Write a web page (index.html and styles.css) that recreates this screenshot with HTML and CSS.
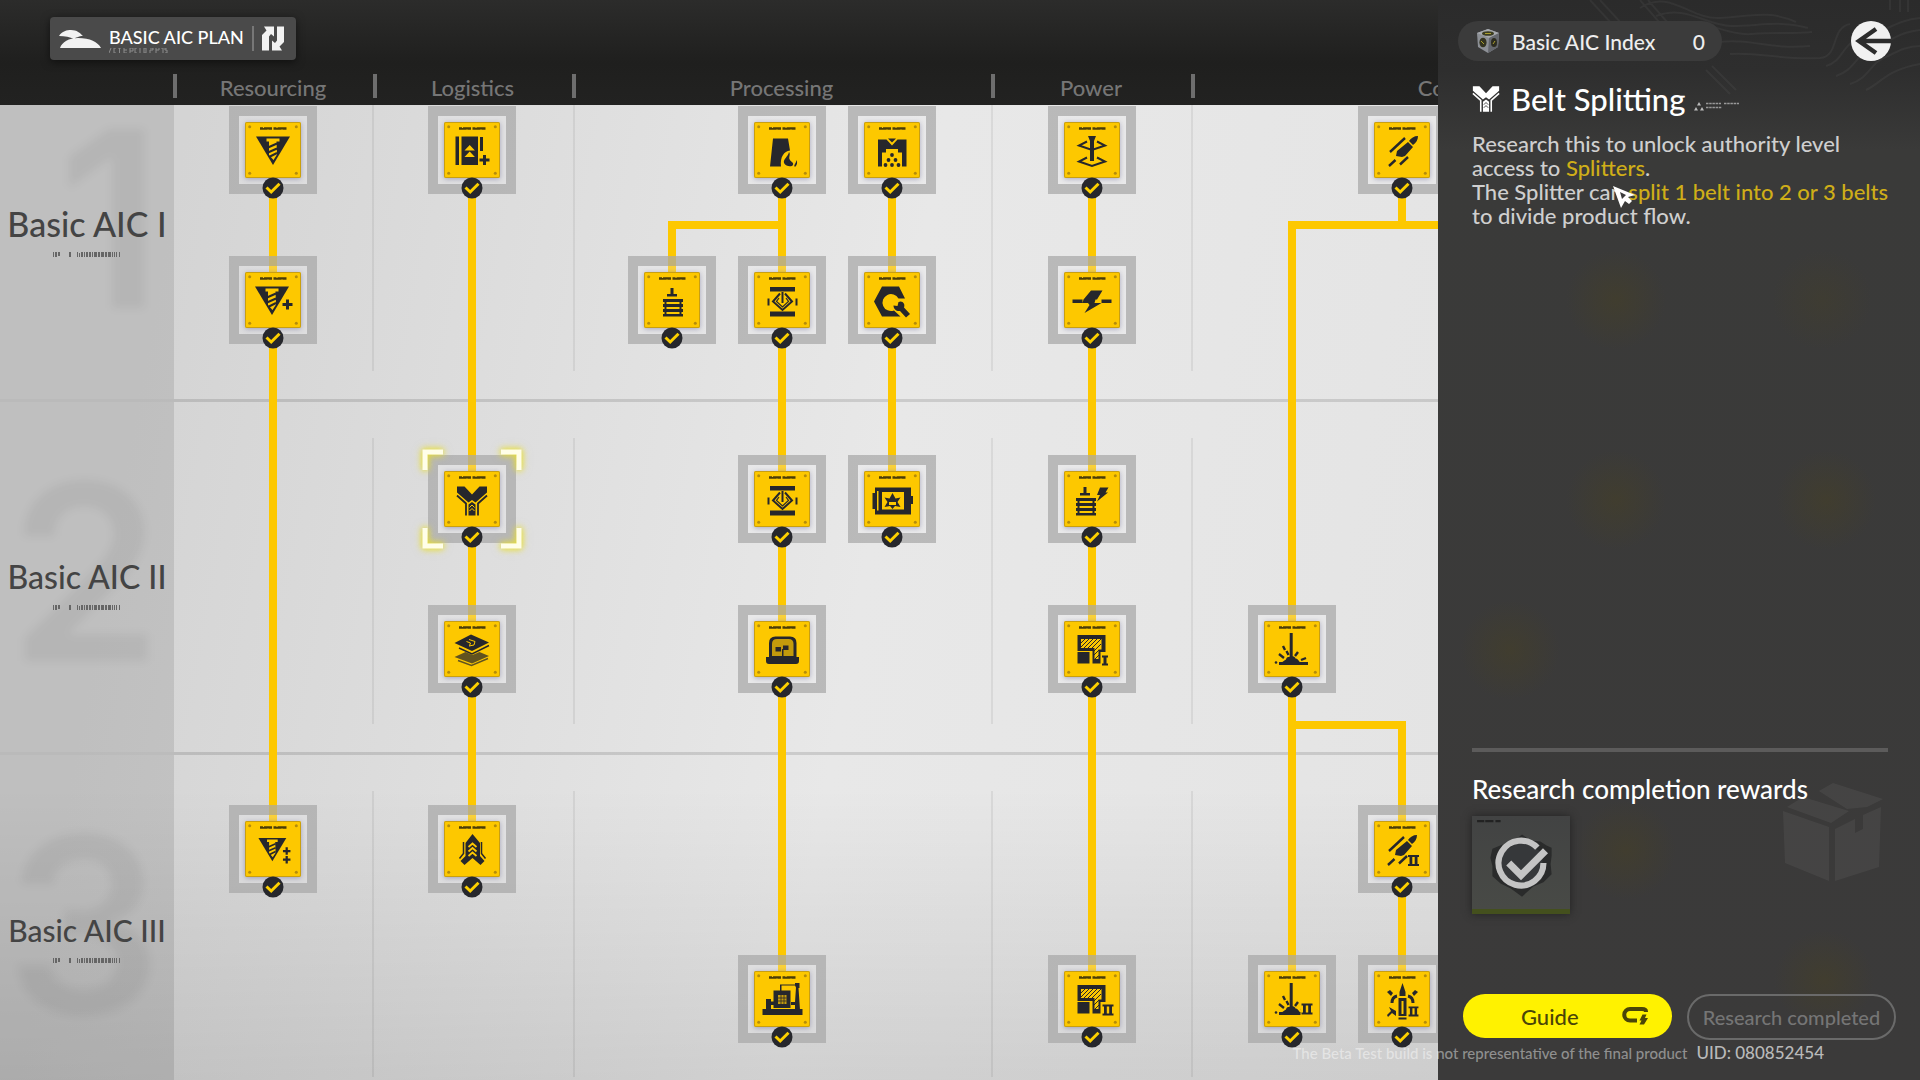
FILE: index.html
```html
<!DOCTYPE html>
<html lang="en">
<head>
<meta charset="utf-8">
<title>Basic AIC Plan</title>
<link rel="stylesheet" href="styles.css">
</head>
<body>
<svg class="defs" aria-hidden="true">
  <defs>
    <g id="screw">
      <path d="M11 14.500H45L28 43Z"/>
      <path class="y" d="M21.500 16.500h13v3h-3l.5 13-3.500 5.500-4.500-5v-13.500h-2.500z"/>
      <path class="k" d="M23 25.500l9-4M23 30.500l9-4M24 35l8-4"/>
    </g>
    <path id="plus" d="M-1.500-5h3v3.500h3.500v3h-3.500v3.500h-3v-3.500h-3.500v-3h3.500z"/>
    <path id="one" d="M0 0h6v2h-1.500v6h1.500v2h-6v-2h1.500v-6h-1.500z"/>
    <path id="two" d="M0 0h11v2h-1.500v7h1.500v2h-11v-2h1.500v-7h-1.500zM4.300 2v7h2.400v-7z" fill-rule="evenodd"/>
    <g id="coil">
      <path d="M26.500 16h3v6h3.500v2.500h-10v-2.500h3.500z"/>
      <path d="M19 27h20v3h-20zM19 32h20v3h-20zM19 37h20v3h-20zM19 42h20v2.500h-20z"/>
      <path d="M20.500 27h2v17h-2zM35.500 27h2v17h-2z"/>
    </g>
    <g id="laser">
      <path d="M25.700 12h3v24h-3zM15 41h29v3h-29zM18 42c1-3 4-2 4.500-5 2-2 3 0 4.500-3 1.500 2 4 1 4.500 3.500 2 0 3 2 5 4.500z"/>
      <path class="k" style="stroke-width:2.400" d="M15 33l5 4M19 25l2 4M22.500 30l2 4M34 31l-3 4M37 39l5-2"/>
      <circle cx="12" cy="41.500" r="1.300"/>
    </g>
    <g id="bullet">
      <path d="M44 14c0 4-2 7-5 9l-4-4c2-3 5-5 9-5zM34 20l5 5-8 9-3 1-6-1 1-5z"/>
      <path class="k" d="M31 16L16 30M21.500 38L15 44M34 35l-8 7.500" style="stroke-width:2.400"/>
    </g>
    <g id="press">
      <path d="M16 15h25v4.500h-25zM16 39.500h25v5h-25zM13.500 26.500h2v7h-2zM41.500 26.500h2v7h-2z"/>
      <path class="k" d="M26 21.500l-7 8 9.500 8.500 9.500-8.500-7-8M28.500 20v11"/>
      <path class="k" d="M25 26l-2.500 3.500 6 5.500 6-5.500-2.500-3.500" style="stroke-width:1.200"/>
    </g>
    <g id="plot">
      <path d="M13.500 14h28v17h-5v11.500h-8v-12.500h-15z"/>
      <path d="M17 18h20.500v10.500h-3v9.500h-4v-11h-13.500z" class="y"/>
      <path class="k" style="stroke-width:1" d="M17 22l4-4M17 26l8-8M20 27l9-9M24 27l9-9M28 27l9-9M30 30l7-7M30 34l5-5M31 38l4-4"/>
      <path d="M13.500 31h12v11.500h-12z"/>
    </g>
    <symbol id="i-drill" viewBox="0 0 56 56"><use href="#screw"/></symbol>
    <symbol id="i-drill2" viewBox="0 0 56 56"><g transform="translate(-1 0)"><use href="#screw"/></g><use href="#plus" x="42.500" y="32.500"/></symbol>
    <symbol id="i-drill3" viewBox="0 0 56 56"><g transform="translate(4.400 5) scale(.82)"><use href="#screw"/></g><g transform="translate(41.700 30) scale(.75)"><use href="#plus"/></g><g transform="translate(41.700 38.700) scale(.75)"><use href="#plus"/></g></symbol>
    <symbol id="i-belt" viewBox="0 0 56 56"><path d="M11.500 14.500h3.500v28.500h-3.500zM17.500 14.500h16.500v28.500h-16.500zM36 15h3v14h-3z"/><path class="y" d="M20.500 28.500l5.200-5.500 5.200 5.500zM20.500 35l5.200-5.500 5.200 5.500z"/><use href="#plus" x="40.500" y="38"/></symbol>
    <symbol id="i-split" viewBox="0 0 56 56"><path d="M13 15.500h7.500l7.500 8 7.500-8h7.500v6l-11.500 10-3.500-2.500-3.500 2.500-11.500-10zM24.500 33.500l3.500-2.500 3.500 2.500v11h-7z"/><path class="k" style="stroke-width:1.800" d="M13 24.500l9 8v12M43 24.500l-9 8v12"/><path class="f" d="M25.500 36.500l2.500-2.500 2.500 2.500M25.500 40l2.500-2.500 2.500 2.500"/></symbol>
    <symbol id="i-layers" viewBox="0 0 56 56"><path d="M10.500 22l16.500-8.500 18 8-17 8.500z"/><path class="k" style="stroke-width:1.500" d="M15 27l13 6 17-8.500"/><path class="f" d="M25 18.500l6 2-1 3.500-5 1M22.500 20.500l4 1.500-1 2.500"/><g opacity=".72"><path d="M10.500 36l11-5 7 3 7-3 9.500 4-17 7.500z"/><path class="k" style="stroke-width:1.500" d="M14 39.500l13.500 5 16.500-7"/></g></symbol>
    <symbol id="i-merge" viewBox="0 0 56 56"><path d="M28.500 13l7.500 9v13l4.500 5-4 4-8-7-8 7-4-4 5-5v-13z"/><path class="k" style="stroke-width:1.500" d="M19.500 21v11.500l-4 5M37.500 21v11.500l4 5"/><path class="f" style="stroke-width:1.800" d="M24.500 26l4-3.500 4 3.500M24.500 30.500l4-3.500 4 3.500M24.500 35l4-3.500 4 3.500"/></symbol>
    <symbol id="i-furnace" viewBox="0 0 56 56"><path d="M19 16.500h15l2 12c-6 1-10 6-9 16h-11z"/><path d="M35 30c2 3-1 5 1 8 1 2 4 2 3 5-1 2-7 2-9-2-1-4 4-6 5-11zM42.500 38c1 2 1 5-1.500 7-2-2 1-3 1.500-7z"/></symbol>
    <symbol id="i-crusher" viewBox="0 0 56 56"><path d="M14 17.500h8.500l5.500 6 5.500-6h9v27h-4.500v-14h-4v-3.500h-12v3.500h-4v14h-4zM24 16.500h8l-4 4z"/><circle cx="28" cy="33" r="1.900"/><circle cx="24.500" cy="38" r="1.900"/><circle cx="31.500" cy="38" r="1.900"/><circle cx="21.500" cy="43" r="1.900"/><circle cx="28" cy="43" r="1.900"/><circle cx="34.500" cy="43" r="1.900"/></symbol>
    <symbol id="i-pole" viewBox="0 0 56 56"><path d="M24 14h8l-2 5v20h-4v-20z"/><path class="k" d="M23 19.500l-8 4 13 4.500 13-4.500-8-4M23 35.500l-8 4 13 4.500 13-4.500-8-4"/></symbol>
    <symbol id="i-coil" viewBox="0 0 56 56"><use href="#coil"/></symbol>
    <symbol id="i-press" viewBox="0 0 56 56"><use href="#press"/></symbol>
    <symbol id="i-wrench" viewBox="0 0 56 56"><path d="M18 14.500h17l6 12h-6.500a8.500 8.500 0 1 0-4.500 12l6.500 6h-18.500l-8-15z"/><path d="M29.500 33.500l4 .5 1-4c4-2 7 2 5.500 5.500l6 6.500-4 3.500-6-6.500c-3.500.5-6.500-2-6.500-5.500z"/></symbol>
    <symbol id="i-bolt" viewBox="0 0 56 56"><path d="M27 18.500h11.500l-5.500 9h-13.500zM24 31h13.500l-17 10 5-8zM8.500 27.500h10v3.500h-10zM37.500 27.500h10v3.500h-10zM19.500 27.500h12l-1 3.500h-12z"/></symbol>
    <symbol id="i-reel" viewBox="0 0 56 56"><path fill-rule="evenodd" d="M11 16.500h36v27h-36zM18 21h22v17.500h-22z"/><path d="M8.500 22h3v16h-3zM46 25h3v8h-3z"/><path d="M28.500 22l3 5.500 5-1-3 4.500 3 5-5.500-1-2.500 3-2.500-3-5.500 1 3-5-3-4.500 5 1z"/><path class="y" d="M25 31h7v3h-7zM13 20h1.500v19.500h-1.500z"/></symbol>
    <symbol id="i-charge" viewBox="0 0 56 56"><g transform="translate(-7 0)"><use href="#coil"/></g><path d="M36 16.500h8.500l-3 5h2.500l-11 9 3-6.500h-3z"/></symbol>
    <symbol id="i-dome" viewBox="0 0 56 56"><path d="M15 36v-14q0-6.500 6.500-6.500h14.500q6.500 0 6.500 6.500v14z"/><path fill="#c39b0c" d="M18 35v-12q0-5 5-5h11.500q5 0 5 5v12z"/><path d="M12 36h33v4q0 3-3 3h-27q-3 0-3-3zM21.500 26h5.500v4.500h-5.500zM29 24.500h5.500v4.500h-5.500zM28 28h1.500v8h-1.500z"/></symbol>
    <symbol id="i-plot1" viewBox="0 0 56 56"><use href="#plot"/><use href="#one" x="38" y="34.500"/></symbol>
    <symbol id="i-plot2" viewBox="0 0 56 56"><use href="#plot"/><use href="#two" x="38.500" y="33.500"/></symbol>
    <symbol id="i-laser" viewBox="0 0 56 56"><use href="#laser"/></symbol>
    <symbol id="i-laser2" viewBox="0 0 56 56"><use href="#laser"/><path class="y" d="M36.500 31h12v14h-12z"/><use href="#two" x="37.500" y="32.500"/></symbol>
    <symbol id="i-bullet" viewBox="0 0 56 56"><use href="#bullet"/></symbol>
    <symbol id="i-bullet2" viewBox="0 0 56 56"><g transform="translate(-1 0)"><use href="#bullet"/></g><use href="#two" x="34" y="34"/></symbol>
    <symbol id="i-ammo2" viewBox="0 0 56 56"><path d="M28.500 12l3 9v4h-6v-4zM24.500 27h8v18h-8zM24.500 46.500h8v2h-8z"/><path class="y" d="M27.500 30h2v13h-2z"/><path class="k" d="M23 25q-5 1-5 7M34 25q5 1 5 7" style="stroke-width:3"/><path d="M13 21l3-2 3 3-2 3zM44 21l-3-2-3 3 2 3zM15 36l7 4v5l-4-3-4 4-1-2 4-4z"/><use href="#two" x="34.500" y="35" transform="translate(3.500 4) scale(.9)"/></symbol>
    <symbol id="i-machine" viewBox="0 0 56 56"><path d="M8.500 38h40v6h-40zM12 28h5v2.500h3v3.500h-3v4h-5zM19.500 19.500h17v17.500h-17zM26 14h1.500v6h-1.500z"/><path d="M26 13.500h15v-1.500h4.500v5h-1l1.500 22h-5v-5h-4v-3h4l1-14.500-1-2h-15z"/><path fill="#c39b0c" d="M24 24h8.500v9h-8.500z"/><path class="k" style="stroke-width:.8" d="M24 27h8.500M24 30h8.500M27 24v9M30 24v9"/></symbol>
    <symbol id="plate" viewBox="0 0 56 56">
      <path d="M15 5.300h12v2.400h-12zM28.500 5.300h13v2.400h-13z" fill="#4b3d08"/>
      <path d="M18.500 5v1M23 7.500v1M32 5v1M37 7.500v1" stroke="#fdc800"/>
      <g fill="#b48c0c"><circle cx="4.700" cy="4.700" r="1.500"/><circle cx="51.300" cy="4.700" r="1.500"/><circle cx="4.700" cy="51.300" r="1.500"/><circle cx="51.300" cy="51.300" r="1.500"/></g>
    </symbol>
    <symbol id="done" viewBox="0 0 22 22"><circle cx="11" cy="11" r="10.500" fill="#26272c"/><path d="M4.500 10.500l4.700 4.500 8.300-8.300" fill="none" stroke="#fdd000" stroke-width="3"/></symbol>
    <symbol id="microcode" viewBox="0 0 68 5"><path d="M0 0h1v5h-1zM2 0h2v5h-2zM5 0h2v4h-2zM16 0h2v5h-2zM24 0h1v5h-1zM26 1h1v4h-1zM28 0h2v5h-2zM31 0h1v5h-1zM33 0h2v5h-2zM36 0h2v5h-2zM39 0h1v5h-1zM41 0h3v5h-3zM45 0h2v5h-2zM48 0h3v5h-3zM52 0h2v5h-2zM55 0h3v5h-3zM59 0h1v5h-1zM61 0h1v5h-1zM63 0h1v5h-1zM66 0h1v5h-1z"/></symbol>
  </defs>
</svg>

<div class="screen">
  <main class="plan">
    <header class="plan-header">
      <button class="plan-switch" type="button">
        <svg class="hill" viewBox="0 0 42 18" aria-hidden="true"><path d="M0 6C3 1 8 0 12 0c6 0 9 3 12 6-4 0-8 2-9 3-4-2-9-3-15-3zM1 18C3 12 10 8 19 8c12 0 20 4 23 10z"/></svg>
        <span class="plan-name">BASIC AIC PLAN
          <svg class="fineprint" viewBox="0 0 60 5" aria-hidden="true"><path d="M2 0L0 5M7 0h-2v5h2M9 0h3M10.500 0v5M15 0v5h3M15 2h3M21 5v-5h3v3h-3M28 0h-2v5h2M31 0v5M35 0h2v5h-2zM41 0h3v2h-3v3M47 0v5M47 2h3v-2M52 0h2v5M58 0h-2v2h2v3h-2"/></svg>
        </span>
        <svg class="swap" viewBox="0 0 22 25" aria-hidden="true"><path d="M0 24.500V9L4.500 4.500 2 0.500H12V10.500L9 8 7 10.500V24.500ZM22 0.500V16L17.500 20.500 20 24.500H10V14.500L13 17 15 14.500V0.500Z"/></svg>
      </button>
      <div class="categories">
        <span>Resourcing</span><span>Logistics</span><span>Processing</span><span>Power</span><span>Combat</span>
      </div>
    </header>

    <div class="board">
      <section class="tier tier-first">
        <div class="tier-label"><b class="ghost" aria-hidden="true">1</b><h2 class="size-l">Basic AIC I</h2><svg class="microcode"><use href="#microcode"/></svg></div>
        <div class="lanes"><i></i><i></i><i></i><i></i><i></i></div>
      </section>
      <section class="tier">
        <div class="tier-label"><b class="ghost" aria-hidden="true">2</b><h2 class="size-m">Basic AIC II</h2><svg class="microcode"><use href="#microcode"/></svg></div>
        <div class="lanes"><i></i><i></i><i></i><i></i><i></i></div>
      </section>
      <section class="tier">
        <div class="tier-label"><b class="ghost" aria-hidden="true">3</b><h2 class="size-s">Basic AIC III</h2><svg class="microcode"><use href="#microcode"/></svg></div>
        <div class="lanes"><i></i><i></i><i></i><i></i><i></i></div>
      </section>

      <svg class="links" width="1720" height="1002" aria-hidden="true">
        <path d="M273 82V740M472 82V740M782 82V890M892 82V390M1092 82V890M782 120H672V190M1402 82V120M1292 890V120H1512V190M1292 620H1402V890"/>
      </svg>

      <button class="node c1 r1" type="button" aria-label="Mining I"><svg class="plate"><use href="#plate"/><use href="#i-drill"/></svg><svg class="done"><use href="#done"/></svg></button>
      <button class="node c1 r2" type="button" aria-label="Mining II"><svg class="plate"><use href="#plate"/><use href="#i-drill2"/></svg><svg class="done"><use href="#done"/></svg></button>
      <button class="node c1 r5" type="button" aria-label="Mining III"><svg class="plate"><use href="#plate"/><use href="#i-drill3"/></svg><svg class="done"><use href="#done"/></svg></button>

      <button class="node c2 r1" type="button" aria-label="Belts"><svg class="plate"><use href="#plate"/><use href="#i-belt"/></svg><svg class="done"><use href="#done"/></svg></button>
      <button class="node c2 r3 selected" type="button" aria-label="Belt Splitting"><svg class="plate"><use href="#plate"/><use href="#i-split"/></svg><svg class="done"><use href="#done"/></svg>
        <svg class="brackets" viewBox="0 0 100 100"><path d="M3 21V3h18M79 3h18v18M97 79v18H79M21 97H3V79"/></svg></button>
      <button class="node c2 r4" type="button" aria-label="Belt Bridging"><svg class="plate"><use href="#plate"/><use href="#i-layers"/></svg><svg class="done"><use href="#done"/></svg></button>
      <button class="node c2 r5" type="button" aria-label="Belt Converging"><svg class="plate"><use href="#plate"/><use href="#i-merge"/></svg><svg class="done"><use href="#done"/></svg></button>

      <button class="node c3 r2" type="button" aria-label="Fitting"><svg class="plate"><use href="#plate"/><use href="#i-coil"/></svg><svg class="done"><use href="#done"/></svg></button>
      <button class="node c4 r1" type="button" aria-label="Refining"><svg class="plate"><use href="#plate"/><use href="#i-furnace"/></svg><svg class="done"><use href="#done"/></svg></button>
      <button class="node c4 r2" type="button" aria-label="Moulding I"><svg class="plate"><use href="#plate"/><use href="#i-press"/></svg><svg class="done"><use href="#done"/></svg></button>
      <button class="node c4 r3" type="button" aria-label="Moulding II"><svg class="plate"><use href="#plate"/><use href="#i-press"/></svg><svg class="done"><use href="#done"/></svg></button>
      <button class="node c4 r4" type="button" aria-label="Planting"><svg class="plate"><use href="#plate"/><use href="#i-dome"/></svg><svg class="done"><use href="#done"/></svg></button>
      <button class="node c4 r6" type="button" aria-label="Machining"><svg class="plate"><use href="#plate"/><use href="#i-machine"/></svg><svg class="done"><use href="#done"/></svg></button>
      <button class="node c5 r1" type="button" aria-label="Shredding"><svg class="plate"><use href="#plate"/><use href="#i-crusher"/></svg><svg class="done"><use href="#done"/></svg></button>
      <button class="node c5 r2" type="button" aria-label="Parts"><svg class="plate"><use href="#plate"/><use href="#i-wrench"/></svg><svg class="done"><use href="#done"/></svg></button>
      <button class="node c5 r3" type="button" aria-label="Grinding"><svg class="plate"><use href="#plate"/><use href="#i-reel"/></svg><svg class="done"><use href="#done"/></svg></button>

      <button class="node c6 r1" type="button" aria-label="Pylons"><svg class="plate"><use href="#plate"/><use href="#i-pole"/></svg><svg class="done"><use href="#done"/></svg></button>
      <button class="node c6 r2" type="button" aria-label="Electricity"><svg class="plate"><use href="#plate"/><use href="#i-bolt"/></svg><svg class="done"><use href="#done"/></svg></button>
      <button class="node c6 r3" type="button" aria-label="Thermal Power"><svg class="plate"><use href="#plate"/><use href="#i-charge"/></svg><svg class="done"><use href="#done"/></svg></button>
      <button class="node c6 r4" type="button" aria-label="Area Expansion I"><svg class="plate"><use href="#plate"/><use href="#i-plot1"/></svg><svg class="done"><use href="#done"/></svg></button>
      <button class="node c6 r6" type="button" aria-label="Area Expansion II"><svg class="plate"><use href="#plate"/><use href="#i-plot2"/></svg><svg class="done"><use href="#done"/></svg></button>

      <button class="node c7 r4" type="button" aria-label="Beam I"><svg class="plate"><use href="#plate"/><use href="#i-laser"/></svg><svg class="done"><use href="#done"/></svg></button>
      <button class="node c7 r6" type="button" aria-label="Beam II"><svg class="plate"><use href="#plate"/><use href="#i-laser2"/></svg><svg class="done"><use href="#done"/></svg></button>
      <button class="node c8 r1" type="button" aria-label="Gun Tower I"><svg class="plate"><use href="#plate"/><use href="#i-bullet"/></svg><svg class="done"><use href="#done"/></svg></button>
      <button class="node c8 r5" type="button" aria-label="Gun Tower II"><svg class="plate"><use href="#plate"/><use href="#i-bullet2"/></svg><svg class="done"><use href="#done"/></svg></button>
      <button class="node c8 r6" type="button" aria-label="Ammunition II"><svg class="plate"><use href="#plate"/><use href="#i-ammo2"/></svg><svg class="done"><use href="#done"/></svg></button>
    </div>
  </main>

  <aside class="detail">
    <svg class="contours" viewBox="0 0 340 100" aria-hidden="true"><path d="M10 0l22 24M20 0l22 24M60 0l26 30M68 0l26 30M126 70l24 24M132 66l24 24M60 8c30-20 50 12 80 10s50-8 76 4M76 16c30-12 50 10 76 10s50-6 76 2M96 24c30-6 50 12 76 10s40 0 60-2M140 42c30-4 50 8 90 4M150 54c30-2 50 6 90 4 20-2 10-30 30-34M246 66c20-6 14-24 40-30 20-4 30-16 54-18M256 76c20-6 20-24 42-32 18-4 20-12 42-14M270 84c20-6 20-22 38-28 12-6 20-10 32-10M286 90c14-6 20-20 54-26M310 0v10M320 0v12M328 0v12"/></svg>
    <div class="detail-top">
      <div class="index">
        <svg viewBox="0 0 26 26" aria-hidden="true"><path fill="#8d9096" d="M13 1l11 4-1 14-10 6-10-6L2 5z"/><path fill="#a6a9ae" d="M13 1l11 4-10 5L2 5z"/><path fill="#65686e" d="M14 10l10-5-1 14-10 6z"/><ellipse cx="13" cy="5.500" rx="6" ry="2.300" fill="#3c3d22"/><ellipse cx="8" cy="14.500" rx="3.600" ry="4.800" fill="#343420"/><ellipse cx="19" cy="14.500" rx="3" ry="4.600" fill="#2c2c20"/><path stroke="#a99d2c" fill="none" d="M10 5.500h6M6 13l3 3M18 16l2-3"/></svg>
        <span>Basic AIC Index</span><span class="index-value">0</span>
      </div>
      <button class="back" type="button" aria-label="Back"><svg viewBox="0 0 40 40" aria-hidden="true"><circle cx="20" cy="20" r="20" fill="#f1f1f1"/><path d="M40 20H11M25 8L8 20l17 12" fill="none" stroke="#2c2c2c" stroke-width="4.500"/></svg></button>
    </div>
    <div class="title">
      <svg class="title-icon" viewBox="12 15 32 30" aria-hidden="true"><path d="M13 15.500h7.500l7.500 8 7.500-8h7.500v5l-11.500 10-3.500-2.500-3.500 2.500-11.500-10zM24.500 33l3.500-2.500 3.500 2.500v11.500h-7z"/><path fill="none" stroke="#fff" stroke-width="1.800" d="M13 23.500l9 8v13M43 23.500l-9 8v13"/><path fill="none" stroke="#333" d="M25.500 36.500l2.500-2.500 2.500 2.500M25.500 40l2.500-2.500 2.500 2.500"/></svg>
      <h1>Belt Splitting</h1>
      <svg class="stamp" viewBox="0 0 48 10" aria-hidden="true"><path d="M5 1l2 3.500h-4zM2 6l2 3.500h-4zM8 6l2 3.500h-4z"/><path d="M12 2.500h15M30 2.500h15M12 6.500h16" fill="none" stroke="#999" stroke-width="1.500" stroke-dasharray="2.500 .7"/></svg>
    </div>
    <p class="desc">Research this to unlock authority level<br>access to <em>Splitters</em>.<br>The Splitter can <em>split 1 belt into 2 or 3 belts</em><br>to divide product flow.</p>

    <section class="rewards">
      <h2>Research completion rewards</h2>
      <div class="reward"><svg viewBox="0 0 96 96" aria-label="Splitter, received" role="img">
        <path d="M5 5h7M13 5h8M23 5h5" stroke="#222" stroke-width="2"/>
        <path fill="#2a2b2b" d="M49 18l8 6 10 1 6 4 5 2v8l-1 8 1 10-8 8-10 4-11 10-11-8-10-5-8-7v-10l-2-8 2-9 10-4 10-3z"/><path fill="#36383a" d="M49 24l20 12v22L49 70 29 58V36z"/>
        <path fill="none" stroke="#c4c4c4" stroke-width="6" d="M64 31A22 22 0 1 0 70 46"/><path fill="none" stroke="#c4c4c4" stroke-width="7" d="M36 46l12 12 24-24"/></svg></div>
      <svg class="crate" viewBox="0 0 104 98" aria-hidden="true"><path d="M2 28l46 16v54L4 80zM54 46l20-10v14l8-4v-14l18-8-2 60-44 14zM6 24l16-10 46 14-18 12zM38 8l14-8 50 16-16 8-20 2z"/></svg>
    </section>

    <div class="actions">
      <button class="guide" type="button"><span>Guide</span><svg viewBox="0 0 26 18" aria-hidden="true"><path fill="none" stroke="#4a4508" stroke-width="4" d="M24 5V4.500Q24 2 20 2H8a5.700 5.700 0 0 0 0 11.500h7"/><path fill="#4a4508" d="M20.500 7.500h4l-1.500 3.500h3l-4 6.500h-4.500l2-4h-2z"/></svg></button>
      <button class="completed" type="button" disabled>Research completed</button>
    </div>
  </aside>

  <svg class="cursor" viewBox="0 0 22 22" aria-hidden="true"><path d="M0 0l22 9-7 2 4 4-3 3-4-3-4 7z"/><path d="M7 6l6 3-4 4z" fill="#3b3b3b"/></svg>
  <footer class="watermark"><span>The Beta Test build is not representative of the final product</span><span class="uid">UID: 080852454</span></footer>
</div>
</body>
</html>
```
FILE: styles.css
```css
* { box-sizing: border-box; }
body {
  margin: 0;
  background: #222;
  color: #fff;
  font-family: Lato, "Open Sans", sans-serif;
  font-weight: 500;
}
h1, h2, p { margin: 0; font-weight: 500; }
button { font: inherit; color: inherit; border: 0; padding: 0; background: none; }
svg { display: block; }
.defs { position: absolute; width: 0; height: 0; }

.screen { position: relative; display: flex; height: 100vh; overflow: hidden; }

/* Research plan */
.plan { flex: 1; min-width: 0; display: flex; flex-direction: column; overflow: hidden; }
.plan-header {
  flex: none;
  width: 1722px;
  padding: 17px 0 7px;
  background: linear-gradient(#2c2c2b, #1f1f1e 60%, #222221);
}
.plan-switch {
  display: flex;
  align-items: center;
  gap: 8px;
  height: 43px;
  margin: 0 0 14px 50px;
  padding: 0 12px 0 9px;
  border-radius: 4px;
  background: #4a4a4a;
  box-shadow: 0 2px 8px #0008;
}
.hill { width: 42px; height: 18px; fill: #f2f2f2; }
.plan-name { display: flex; flex-direction: column; padding-top: 2px; font-size: 18px; line-height: 22px; white-space: nowrap; }
.fineprint { width: 60px; height: 5px; fill: none; stroke: #8c8c8c; }
.swap { width: 32px; height: 25px; padding-left: 8px; border-left: 2px solid #777; fill: #f2f2f2; }

.categories {
  display: grid;
  grid-template-columns: 200px 199px 419px 200px 530px;
  margin-left: 173px;
}
.categories span {
  height: 24px;
  padding: 2px 4px 0 0;
  border-left: 4px solid #6e6e6e;
  color: #767676;
  font-size: 22px;
  line-height: 24px;
  text-align: center;
}

.board {
  position: relative;
  flex: 1;
  width: 1722px;
  overflow: hidden;
  background:
    linear-gradient(#0000 70%, #0000001a),
    linear-gradient(100deg, #d4d4d4 10%, #ddd 28%, #e8e8e8 50%, #e2e2e2);
}
.tier { display: flex; height: 353px; border-bottom: 3px solid #0000001f; }
.tier-first { height: 297px; }
.tier-label {
  position: relative;
  width: 174px;
  display: flex;
  flex-direction: column;
  justify-content: flex-end;
  align-items: center;
  gap: 8px;
  padding-bottom: 142px;
  background: #00000019;
  color: #444;
}
.tier-label h2 { position: relative; line-height: 40px; white-space: nowrap; }
.tier-label .size-l { font-size: 34px; }
.tier-label .size-m { font-size: 32px; }
.tier-label .size-s { font-size: 30px; }
.ghost {
  position: absolute;
  right: 12px;
  bottom: 72px;
  color: #0000000d;
  font-family: Inter, sans-serif;
  font-size: 246px;
  font-weight: 600;
  line-height: 216px;
  filter: blur(4px);
}
.microcode { position: relative; width: 68px; height: 5px; fill: #666; }
.lanes { flex: 1; display: grid; grid-template-columns: 200px 201px 418px 200px 1fr; padding: 36px 0 28px; }
.tier-first .lanes { padding-top: 0; }
.lanes i { border-right: 2px solid #00000010; }

.links { position: absolute; left: 0; top: 0; }
.links path { fill: none; stroke: #fdc800; stroke-width: 8; }

.node {
  position: absolute;
  display: grid;
  place-items: center;
  width: 88px;
  height: 88px;
  border: 10px solid #a8a8a8b8;
}
.node::before {
  content: "";
  position: absolute;
  inset: 0;
  box-shadow: inset 0 0 0 20px #f0f0f83a;
}
.c1 { left: 229px; }
.c2 { left: 428px; }
.c3 { left: 628px; }
.c4 { left: 738px; }
.c5 { left: 848px; }
.c6 { left: 1048px; }
.c7 { left: 1248px; }
.c8 { left: 1358px; }
.r1 { top: 1px; }
.r2 { top: 151px; }
.r3 { top: 350px; }
.r4 { top: 500px; }
.r5 { top: 700px; }
.r6 { top: 850px; }
.plate {
  position: relative;
  width: 56px;
  height: 56px;
  border-radius: 2px;
  background: #fdc800;
  box-shadow: inset 0 0 0 1px #c99f10, 0 1px 5px #55558870;
  fill: #26272c;
}
.done { position: absolute; left: 23px; bottom: -15px; width: 22px; height: 22px; }
.brackets {
  position: absolute;
  left: -16px;
  top: -16px;
  width: 100px;
  height: 100px;
  overflow: visible;
  fill: none;
  stroke: #fffee8;
  stroke-width: 5;
  filter: drop-shadow(0 0 3px #e8df30) drop-shadow(0 0 3px #e8df3088);
}
.y { fill: #fdc800; }
.k { fill: none; stroke: #26272c; stroke-width: 2; }
.f { fill: none; stroke: #fdc800; stroke-width: 1; }

/* Detail panel */
.detail {
  position: relative;
  flex: none;
  display: flex;
  flex-direction: column;
  width: 482px;
  padding: 21px 24px 40px 25px;
  background:
    radial-gradient(circle at 178px 300px, #4a421f66, #0000 50px),
    radial-gradient(circle at 384px 300px, #4a421f44, #0000 50px),
    radial-gradient(circle at 178px 500px, #4a421f66, #0000 50px),
    radial-gradient(circle at 388px 500px, #4a421f66, #0000 50px),
    radial-gradient(circle at 72px 650px, #4a421f66, #0000 50px),
    radial-gradient(circle at 188px 850px, #4a421f66, #0000 50px),
    radial-gradient(circle at 386px 980px, #4a421f66, #0000 50px),
    linear-gradient(#2b2b2b, #2e2e2e 70px, #3a3a39 150px, #3b3a3a);
}
.contours { position: absolute; right: 0; top: 0; width: 340px; height: 100px; fill: none; stroke: #ffffff0b; stroke-width: 2; }
.detail-top { position: relative; display: flex; justify-content: space-between; padding-right: 5px; }
.detail-top .index { margin-left: -5px; }
.index {
  display: flex;
  align-items: center;
  gap: 11px;
  width: 264px;
  height: 40px;
  padding: 0 17px;
  border-radius: 20px;
  background: #3b3b3b;
  color: #eee;
  font-size: 21px;
}
.index svg { width: 26px; height: 26px; }
.index-value { margin-left: auto; }
.back, .back svg { width: 40px; height: 40px; }

.title { position: relative; display: flex; align-items: center; gap: 11px; height: 38px; margin: 19px 9px 0; }
.title-icon { width: 28px; height: 28px; fill: #fff; }
.title h1 { font-size: 31px; line-height: 38px; }
.stamp { width: 48px; height: 10px; margin: 14px 0 0 -2px; fill: #bbb; }
.desc { margin: 14px 9px 0; color: #cfcfcf; font-size: 22px; line-height: 24px; white-space: nowrap; }
.desc em { color: #cfae18; font-style: normal; }

.rewards {
  position: relative;
  margin: auto 8px 80px 9px;
  padding-top: 21px;
  border-top: 4px solid #5c5b5b;
}
.rewards h2 { position: relative; z-index: 1; font-size: 26px; line-height: 32px; }
.reward {
  width: 98px;
  height: 98px;
  margin-top: 11px;
  border-bottom: 5px solid #44501d;
  background: linear-gradient(#424343, #484a46);
  box-shadow: 0 0 8px #222;
}
.crate { position: absolute; right: 3px; top: 31px; width: 104px; height: 98px; fill: #ffffff0e; }

.actions { display: grid; grid-template-columns: 1fr 1fr; gap: 15px; }
.actions button { height: 46px; border-radius: 23px; white-space: nowrap; }
.actions .guide {
  display: flex;
  align-items: center;
  height: 44px;
  padding: 0 24px 0 58px;
  justify-content: space-between;
  background: #fff200;
  color: #4a4508;
  font-size: 22px;
}
.guide svg { width: 26px; height: 18px; }
.actions .completed { border: 2px solid #6a6a6a; color: #757575; font-size: 20px; }

.cursor { position: absolute; right: 285px; top: 186px; width: 22px; height: 22px; fill: #fff; }
.watermark {
  position: absolute;
  right: 96px;
  bottom: 16px;
  display: flex;
  gap: 9px;
  align-items: center;
  color: #ffffff70;
  font-size: 15px;
  line-height: 22px;
}
.uid { color: #b9b9b9; font-size: 17px; }
```
